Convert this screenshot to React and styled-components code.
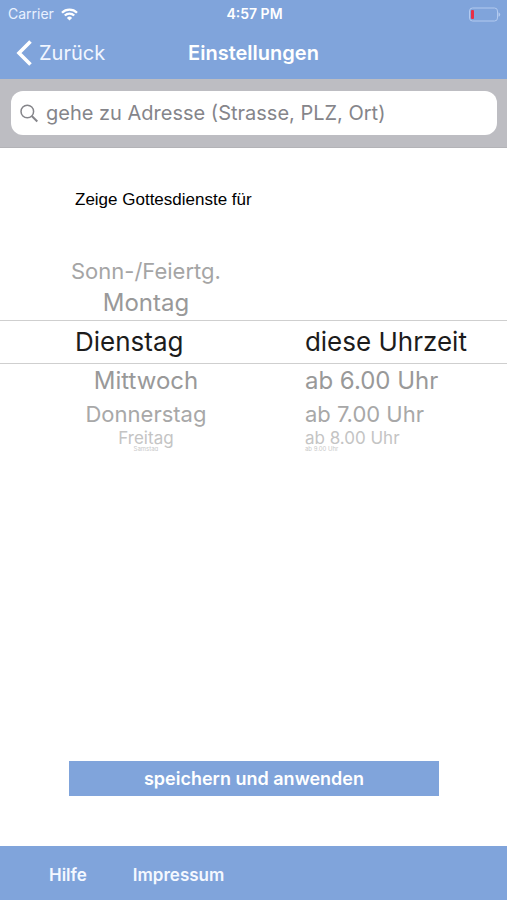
import React, { useState } from "react";
import styled, { createGlobalStyle } from "styled-components";

const BLUE = "#80a4db";

const GlobalStyle = createGlobalStyle`
  * { box-sizing: border-box; }
  body {
    margin: 0;
    background: #fff;
    font-family: Inter, "Liberation Sans", sans-serif;
  }
  button, input { font-family: inherit; }
`;

const Screen = styled.div`
  display: flex;
  flex-direction: column;
  min-height: 100vh;
`;

const Header = styled.header`
  background: ${BLUE};
  color: #fff;
`;

const ThreeColumns = styled.div`
  display: grid;
  grid-template-columns: 1fr auto 1fr;
  align-items: center;
`;

const StatusBar = styled(ThreeColumns)`
  height: 28px;
  padding: 0 6px 0 8px;
  font-size: 14px;
  line-height: 16px;
`;

const Carrier = styled.div`
  display: flex;
  align-items: center;
  gap: 7px;
  color: #e9f1ff;
`;

const Clock = styled.time`
  font-weight: 600;
`;

const BatteryIcon = styled.svg`
  justify-self: end;
`;

const NavBar = styled(ThreeColumns)`
  height: 51px;
  padding: 0 16px 2px;
`;

const BackButton = styled.button`
  display: flex;
  align-items: center;
  justify-self: start;
  gap: 7px;
  padding: 0;
  border: 0;
  background: none;
  color: #f1f6ff;
  font-size: 20px;
  line-height: 28px;
  cursor: pointer;
`;

const Title = styled.h1`
  margin: 0;
  font-size: 20px;
  line-height: 28px;
  font-weight: 600;
`;

const SearchBar = styled.form`
  padding: 12px 10px 12px 11px;
  background: #bdbdc2;
  border-bottom: 1px solid #b3b3b7;
`;

const SearchField = styled.label`
  display: flex;
  align-items: center;
  gap: 8px;
  height: 44px;
  padding: 0 9px;
  border-radius: 12px;
  background: #fff;
`;

const SearchInput = styled.input`
  flex: 1;
  min-width: 0;
  padding: 0;
  border: 0;
  outline: 0;
  background: none;
  color: #222;
  font-size: 20px;
  line-height: 28px;
  &::placeholder { color: #85858a; opacity: 1; }
`;

const Main = styled.main`
  display: flex;
  flex: 1;
  flex-direction: column;
`;

const Prompt = styled.h2`
  margin: 40px 75px 44px;
  color: #000;
  font-family: "Liberation Sans", Arial, sans-serif;
  font-size: 17px;
  line-height: 24px;
  font-weight: 400;
`;

const Picker = styled.div`
  display: grid;
  grid-template-columns: 19fr 14fr;
  height: 195px;
  overflow: hidden;
`;

const Wheel = styled.div`
  display: flex;
  flex-direction: column;
  justify-content: flex-end;
  text-align: ${(p) => p.$align};
`;

const steps = {
  "-2": { height: 30, line: 28, size: 22, color: "#a5a5a5" },
  "-1": { height: 34, line: 32, size: 24, color: "#999" },
  0: { height: 44, line: 42, size: 26, color: "#1c1c1c" },
  1: { height: 34, line: 32, size: 24, color: "#999" },
  2: { height: 32, line: 30, size: 22, color: "#a8a8a8" },
  3: { height: 16, line: 16, size: 17, color: "#c4c4c4" },
  4: { height: 5, line: 5, size: 6, color: "#c8c8c8" },
};

const Option = styled.button`
  flex: none;
  height: ${(p) => steps[p.$step].height}px;
  padding: 0 0 0 ${(p) => p.$inset}px;
  border: solid #cfcfcf;
  border-width: ${(p) => (p.$step === 0 ? "1px 0" : "0")};
  background: none;
  color: ${(p) => steps[p.$step].color};
  font-size: ${(p) => steps[p.$step].size}px;
  line-height: ${(p) => steps[p.$step].line}px;
  text-align: ${(p) => (p.$step === 0 ? "left" : "inherit")};
  white-space: nowrap;
  cursor: pointer;
`;

const SaveButton = styled.button`
  height: 35px;
  margin: auto 68px 50px 69px;
  padding: 0;
  border: 0;
  background: ${BLUE};
  color: #fff;
  font-size: 18px;
  line-height: 24px;
  font-weight: 600;
  cursor: pointer;
`;

const Toolbar = styled.nav`
  display: flex;
  align-items: center;
  gap: 46px;
  height: 54px;
  padding: 4px 49px 0;
  background: ${BLUE};
`;

const ToolbarLink = styled.a`
  color: #f4f8ff;
  font-size: 17px;
  line-height: 24px;
  font-weight: 600;
  text-decoration: none;
`;

const days = [
  { label: "Sonn-/Feiertg.", step: -2 },
  { label: "Montag", step: -1 },
  { label: "Dienstag", step: 0 },
  { label: "Mittwoch", step: 1 },
  { label: "Donnerstag", step: 2 },
  { label: "Freitag", step: 3 },
  { label: "Samstag", step: 4 },
];

const times = [
  { label: "diese Uhrzeit", step: 0 },
  { label: "ab 6.00 Uhr", step: 1 },
  { label: "ab 7.00 Uhr", step: 2 },
  { label: "ab 8.00 Uhr", step: 3 },
  { label: "ab 9.00 Uhr", step: 4 },
];

function PickerWheel({ name, items, align, inset, selectedInset }) {
  return (
    <Wheel role="listbox" aria-label={name} $align={align}>
      {items.map(({ label, step }) => (
        <Option
          key={label}
          type="button"
          role="option"
          aria-selected={step === 0}
          $step={step}
          $inset={step === 0 ? selectedInset : inset}
        >
          {label}
        </Option>
      ))}
    </Wheel>
  );
}

export default function App() {
  const [query, setQuery] = useState("");

  return (
    <Screen>
      <GlobalStyle />
      <Header>
        <StatusBar>
          <Carrier>
            Carrier
            <svg width="17" height="13" viewBox="0 0 17 13" fill="none" stroke="#fff" strokeWidth="2.3" aria-hidden="true">
              <path d="M1 4.7a10.6 10.6 0 0 1 15 0" />
              <path d="M3.8 7.5a6.6 6.6 0 0 1 9.4 0" />
              <path d="M8.5 12.6 5.9 9.9a3.7 3.7 0 0 1 5.2 0z" fill="#fff" stroke="none" />
            </svg>
          </Carrier>
          <Clock>4:57 PM</Clock>
          <BatteryIcon width="33" height="15" viewBox="0 0 33 15" aria-label="Batterie fast leer">
            <rect x="1.500" y="1" width="28" height="13" rx="3" fill="none" stroke="#b3caef" />
            <path d="M30.5 5.2v4.6q1.7-.7 1.7-2.3t-1.7-2.3z" fill="#b3caef" />
            <rect x="3" y="3" width="3" height="9" rx="1" fill="#e92f46" />
          </BatteryIcon>
        </StatusBar>
        <NavBar>
          <BackButton type="button">
            <svg width="16" height="26" viewBox="0 0 16 26" fill="none" stroke="#fff" strokeWidth="3.6" aria-hidden="true">
              <path d="M14.5 1.5 3 13l11.5 11.5" />
            </svg>
            Zurück
          </BackButton>
          <Title>Einstellungen</Title>
        </NavBar>
      </Header>
      <SearchBar role="search" onSubmit={(e) => e.preventDefault()}>
        <SearchField>
          <svg width="18" height="19" viewBox="0 0 18 19" fill="none" stroke="#85858a" strokeWidth="1.5" aria-hidden="true">
            <circle cx="7.3" cy="7.5" r="6.3" />
            <path d="m11.8 12 5.5 5.5" strokeWidth="2" />
          </svg>
          <SearchInput
            type="text"
            aria-label="Adresse"
            placeholder="gehe zu Adresse (Strasse, PLZ, Ort)"
            value={query}
            onChange={(e) => setQuery(e.target.value)}
          />
        </SearchField>
      </SearchBar>
      <Main>
        <Prompt>Zeige Gottesdienste für</Prompt>
        <Picker>
          <PickerWheel name="Tag" items={days} align="center" inset={0} selectedInset={75} />
          <PickerWheel name="Uhrzeit" items={times} align="left" inset={13} selectedInset={13} />
        </Picker>
        <SaveButton type="button">speichern und anwenden</SaveButton>
      </Main>
      <Toolbar>
        <ToolbarLink href="#hilfe">Hilfe</ToolbarLink>
        <ToolbarLink href="#impressum">Impressum</ToolbarLink>
      </Toolbar>
    </Screen>
  );
}
